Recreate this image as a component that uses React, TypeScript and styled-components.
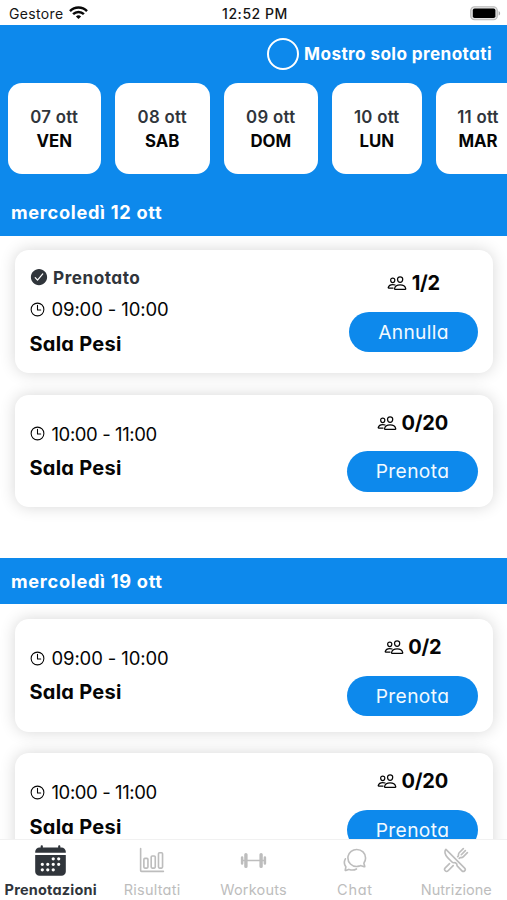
import React from "react";
import styled, { createGlobalStyle } from "styled-components";
import {
  IoBarChartOutline,
  IoBarbellOutline,
  IoCalendar,
  IoChatbubblesOutline,
  IoCheckmarkCircle,
  IoPeopleOutline,
  IoRestaurantOutline,
  IoTimeOutline,
} from "react-icons/io5";

const blue = "#0d89ec";
const slate = "#30353b";

const GlobalStyle = createGlobalStyle`
  * { box-sizing: border-box; }
  body {
    margin: 0;
    background: #fff;
    color: #050505;
    font-family: "Inter", "Open Sans", sans-serif;
    font-feature-settings: "cv11" 1;
    overflow: hidden;
  }
`;

const Screen = styled.div`
  display: flex;
  flex-direction: column;
  width: 507px;
  height: 900px;
  overflow: hidden;
`;

const StatusBar = styled.header`
  display: grid;
  grid-template-columns: 1fr auto 1fr;
  align-items: center;
  flex: none;
  height: 25px;
  padding: 1px 6px 0 9px;
  font-size: 14px;
  letter-spacing: 0.35px;
  color: #151515;
  font-feature-settings: normal;
`;

const Carrier = styled.div`
  display: flex;
  align-items: center;
  gap: 5px;
`;

const Clock = styled.div`
  font-weight: 500;
  letter-spacing: 0.55px;
`;

const Battery = styled.div`
  display: flex;
  justify-content: flex-end;
`;

const Filter = styled.div`
  display: flex;
  flex: none;
  align-items: center;
  justify-content: flex-end;
  gap: 5px;
  height: 58px;
  padding: 0 15px 1px 0;
  background: ${blue};
  color: #fff;
  font-size: 17.2px;
  font-weight: 700;
  letter-spacing: 0.38px;
`;

const Radio = styled.span`
  width: 32px;
  height: 32px;
  border: 2px solid #fff;
  border-radius: 50%;
`;

const Days = styled.div`
  display: flex;
  flex: none;
  gap: 14.5px;
  height: 106.25px;
  padding-left: 8px;
  background: ${blue};
  overflow: hidden;
`;

const DayCard = styled.div<{ $width: number }>`
  display: flex;
  flex: none;
  flex-direction: column;
  align-items: center;
  justify-content: center;
  width: ${(p) => p.$width}px;
  height: 91.25px;
  padding-top: 1.5px;
  border-radius: 14px;
  background: #fff;
  font-size: 16.8px;
  line-height: 24.5px;
`;

const DayDate = styled.span`
  color: ${slate};
  font-weight: 600;
  letter-spacing: 0.28px;
`;

const DayName = styled.span`
  font-weight: 700;
`;

const Band = styled.h2`
  display: flex;
  flex: none;
  align-items: center;
  height: 46.25px;
  margin: 0;
  padding-left: 11px;
  background: ${blue};
  color: #fff;
  font-size: 18.2px;
  font-weight: 700;
  letter-spacing: 0.7px;
`;

const Schedule = styled.main`
  flex: 1;
  min-height: 0;
  overflow: hidden;
`;

const Slots = styled.div`
  display: flex;
  flex-direction: column;
  gap: 21.75px;
  padding: 14.75px 14.5px 51px 15px;
`;

const Slot = styled.article<{ $booked?: boolean }>`
  display: flex;
  align-items: center;
  justify-content: space-between;
  height: ${(p) => (p.$booked ? 122.5 : 112.5)}px;
  padding: 0 14.5px;
  border-radius: 14px;
  background: #fff;
  box-shadow: 0 0 16px rgba(0, 0, 0, 0.16);
`;

const Details = styled.div`
  display: flex;
  flex-direction: column;
`;

const Booked = styled.div`
  display: flex;
  align-items: center;
  gap: 4.5px;
  height: 30px;
  color: ${slate};
  font-size: 17.2px;
  font-weight: 700;
  letter-spacing: 0.5px;

  svg { margin-left: -1px; }
`;

const Time = styled.div<{ $tight?: boolean }>`
  display: flex;
  align-items: center;
  gap: 6px;
  height: 34.5px;
  font-size: 18.5px;
  letter-spacing: ${(p) => (p.$tight ? -0.4 : -0.12)}px;

  svg { margin-left: -1px; }
`;

const Room = styled.div`
  height: 34.5px;
  font-size: 20px;
  font-weight: 700;
  line-height: 34px;
  letter-spacing: 0.25px;
`;

const Action = styled.div`
  display: flex;
  flex-direction: column;
  align-items: center;
  gap: 16px;
`;

const Seats = styled.div`
  display: flex;
  align-items: center;
  gap: 4.5px;
  height: 25px;
  font-size: 20px;
  font-weight: 700;
  letter-spacing: -0.25px;
`;

const Button = styled.button<{ $width: number }>`
  width: ${(p) => p.$width}px;
  height: 40.5px;
  padding: 0;
  border: 0;
  border-radius: 21px;
  background: ${blue};
  color: #f2faff;
  font: 400 19.2px "Inter", sans-serif;
  font-feature-settings: "cv11" 1;
  letter-spacing: 0.35px;
`;

const TabBar = styled.nav`
  display: grid;
  grid-template-columns: repeat(5, 1fr);
  flex: none;
  height: 61px;
  border-top: 1px solid #f1f1f1;
  background: #fff;
`;

const Tab = styled.div<{ $active?: boolean; $spacing: number }>`
  display: flex;
  flex-direction: column;
  align-items: center;
  color: ${(p) => (p.$active ? slate : "#bdbdbd")};
  font-size: 14.5px;
  font-weight: ${(p) => (p.$active ? 700 : 400)};
  line-height: 19px;
  letter-spacing: ${(p) => p.$spacing}px;
  white-space: nowrap;
`;

const TabIcon = styled.span`
  display: flex;
  align-items: center;
  justify-content: center;
  height: 40px;
`;

const days = [
  { date: "07 ott", name: "VEN", width: 92.5 },
  { date: "08 ott", name: "SAB", width: 94.5 },
  { date: "09 ott", name: "DOM", width: 93.5 },
  { date: "10 ott", name: "LUN", width: 89.5 },
  { date: "11 ott", name: "MAR", width: 84 },
];

type SlotData = { time: string; seats: string; booked?: boolean };

const groups: { title: string; slots: SlotData[] }[] = [
  {
    title: "mercoledì 12 ott",
    slots: [
      { time: "09:00 - 10:00", seats: "1/2", booked: true },
      { time: "10:00 - 11:00", seats: "0/20" },
    ],
  },
  {
    title: "mercoledì 19 ott",
    slots: [
      { time: "09:00 - 10:00", seats: "0/2" },
      { time: "10:00 - 11:00", seats: "0/20" },
    ],
  },
];

const tabs = [
  { label: "Prenotazioni", Icon: IoCalendar, size: 35, spacing: 0.2, active: true },
  { label: "Risultati", Icon: IoBarChartOutline, size: 26, spacing: 0.25 },
  { label: "Workouts", Icon: IoBarbellOutline, size: 27, spacing: 0.2 },
  { label: "Chat", Icon: IoChatbubblesOutline, size: 26, spacing: 0.7 },
  { label: "Nutrizione", Icon: IoRestaurantOutline, size: 26, spacing: 0.05 },
];

function WifiIcon() {
  return (
    <svg width="19" height="14" viewBox="0 0 19 14" fill="none" stroke="#080808" strokeWidth="2.5">
      <path d="M1 5.1a12.1 12.1 0 0 1 17 0" />
      <path d="M4.1 8.2a7.7 7.7 0 0 1 10.8 0" />
      <path d="M6.9 10.4a3.8 3.8 0 0 1 5.2 0L9.5 13z" fill="#080808" stroke="none" />
    </svg>
  );
}

function BatteryIcon() {
  return (
    <svg width="31" height="15" viewBox="0 0 31 15">
      <rect x="0.75" y="0.75" width="26.5" height="13" rx="3.8" fill="#e4e4e4" stroke="#b9b9b9" strokeWidth="1.2" />
      <rect x="2.8" y="2.6" width="22.6" height="9.4" rx="1.8" fill="#000" />
      <path d="M28.6 5c2 .8 2 3.8 0 4.6z" fill="#aaa" />
    </svg>
  );
}

function SlotCard({ time, seats, booked }: SlotData) {
  return (
    <Slot $booked={booked}>
      <Details>
        {booked && (
          <Booked>
            <IoCheckmarkCircle size={20} />
            Prenotato
          </Booked>
        )}
        <Time $tight={time.startsWith("10")}>
          <IoTimeOutline size={17} />
          {time}
        </Time>
        <Room>Sala Pesi</Room>
      </Details>
      <Action>
        <Seats>
          <IoPeopleOutline size={20} />
          {seats}
        </Seats>
        <Button $width={booked ? 129 : 131}>{booked ? "Annulla" : "Prenota"}</Button>
      </Action>
    </Slot>
  );
}

export default function App() {
  return (
    <>
      <GlobalStyle />
      <Screen>
        <StatusBar>
          <Carrier>
            Gestore
            <WifiIcon />
          </Carrier>
          <Clock>12:52 PM</Clock>
          <Battery>
            <BatteryIcon />
          </Battery>
        </StatusBar>
        <Filter>
          <Radio />
          Mostro solo prenotati
        </Filter>
        <Days>
          {days.map((d) => (
            <DayCard key={d.date} $width={d.width}>
              <DayDate>{d.date}</DayDate>
              <DayName>{d.name}</DayName>
            </DayCard>
          ))}
        </Days>
        <Schedule>
          {groups.map((g) => (
            <section key={g.title}>
              <Band>{g.title}</Band>
              <Slots>
                {g.slots.map((s) => (
                  <SlotCard key={s.time} {...s} />
                ))}
              </Slots>
            </section>
          ))}
        </Schedule>
        <TabBar>
          {tabs.map(({ label, Icon, size, spacing, active }) => (
            <Tab key={label} $active={active} $spacing={spacing}>
              <TabIcon>
                <Icon size={size} />
              </TabIcon>
              {label}
            </Tab>
          ))}
        </TabBar>
      </Screen>
    </>
  );
}
